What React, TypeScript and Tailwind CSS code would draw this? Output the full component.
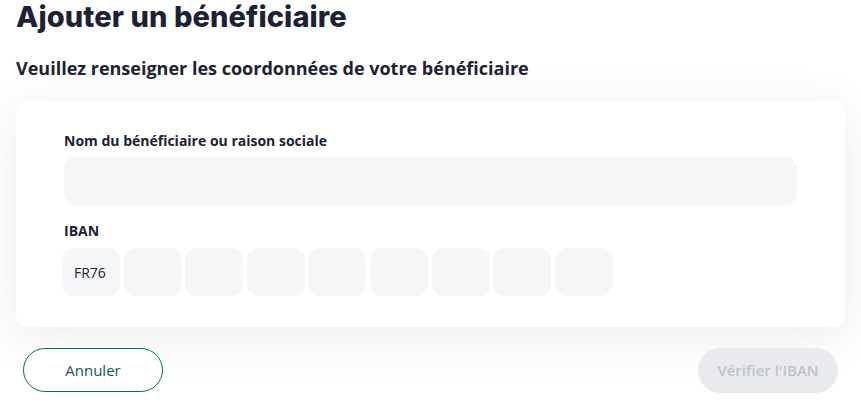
import { useState } from 'react';

const IBAN_BLOCKS = 9;

export default function App() {
  const [nom, setNom] = useState('');
  const [blocks, setBlocks] = useState<string[]>(['FR76', ...Array(IBAN_BLOCKS - 1).fill('')]);

  const updateBlock = (i: number, v: string) => {
    const next = [...blocks];
    next[i] = v.toUpperCase().slice(0, 4);
    setBlocks(next);
  };

  const ibanComplet = blocks.join('').length >= 27;

  return (
    <div className="min-h-screen bg-white px-4 font-['Open_Sans',sans-serif] text-[#1a2233]">
      <h1 className="pt-[1px] font-['Inter',sans-serif] text-[29px] font-extrabold leading-[31px] tracking-[0.1px]">
        Ajouter un bénéficiaire
      </h1>
      <h2 className="mt-[24px] text-[18px] font-bold leading-[24px]">
        Veuillez renseigner les coordonnées de votre bénéficiaire
      </h2>

      <div className="mt-[21px] rounded-[12px] bg-white px-12 pt-[30px] pb-[31px] shadow-[0_10px_50px_rgba(30,40,70,0.09)]">
        <label className="block text-[14px] font-bold leading-[20px]">
          Nom du bénéficiaire ou raison sociale
        </label>
        <input
          value={nom}
          onChange={(e) => setNom(e.target.value)}
          className="mt-[6px] block h-12 w-full rounded-[12px] bg-[#f5f6f8] px-3 text-[14px] outline-none"
        />

        <label className="mt-[16px] block text-[14px] font-bold leading-[20px]">IBAN</label>
        <div className="-ml-[2px] mt-[7px] flex gap-[3.6px]">
          {blocks.map((b, i) => (
            <input
              key={i}
              value={b}
              onChange={(e) => updateBlock(i, e.target.value)}
              className="h-12 w-[58px] shrink-0 rounded-[12px] bg-[#f5f6f8] px-3 text-[14px] text-[#1a2233] outline-none"
            />
          ))}
        </div>
      </div>

      <div className="mt-[21px] flex justify-between px-[7px]">
        <button className="h-[44px] w-[140px] rounded-full border border-[#00755e] bg-white text-[15px] font-medium text-[#0b5c55]">
          Annuler
        </button>
        <button
          disabled={!ibanComplet}
          className="h-[45px] w-[140px] rounded-full bg-[#e9eaee] text-[15px] font-semibold text-[#bfc2cb]"
        >
          Vérifier l'IBAN
        </button>
      </div>
    </div>
  );
}
